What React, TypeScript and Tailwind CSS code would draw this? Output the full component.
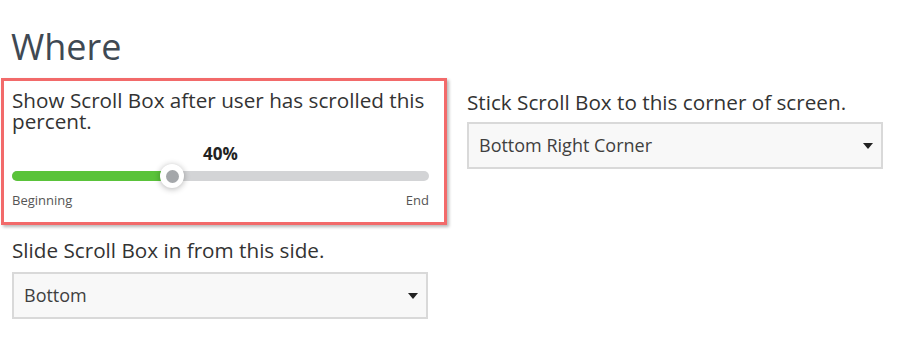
import type React from "react";

const font = { fontFamily: '"Open Sans", "Noto Sans", sans-serif' };

// Select field with caret
const SelectBox: React.FC<{ value: string }> = ({ value }) => (
  <div className="flex h-[47px] w-[416px] items-center justify-between border-2 border-[#d9d9d9] bg-[#f8f8f8] pl-[10px] pr-[8px]">
    <span className="text-[18px] text-[#3f3f3f]">{value}</span>
    <svg width="10" height="6" viewBox="0 0 10 6" className="mt-[1px]">
      <path d="M0 0 L10 0 L5 6 Z" fill="#222" />
    </svg>
  </div>
);

export default function App() {
  const percent = 40;
  const thumbLeft = 160; // px from track start

  return (
    <div className="min-h-[354px] w-[900px] bg-white" style={font}>
      <h1 className="pl-[11px] pt-[27px] text-[36px] font-medium leading-[40px] text-[#3f4953]">Where</h1>

      <div className="mt-[11px] flex">
        {/* Left column */}
        <div className="flex flex-col">
          <div className="ml-[1px] w-[446px] border-[3px] border-[#f26a6a] pb-[13px] pl-[8px] pr-[15px] pt-[9px] shadow-[2px_2px_3px_rgba(0,0,0,0.28)]">
            <div className="text-[20.7px] leading-[21px] text-[#333]">
              Show Scroll Box after user has scrolled this percent.
            </div>
            <div className="mt-[12px] text-center text-[17px] font-bold leading-[20px] text-[#222]">
              {percent}%
            </div>
            <div className="relative mt-[7px] h-[10px] rounded-full bg-[#d3d4d6]">
              <div className="h-full rounded-full bg-[#5ac33a]" style={{ width: thumbLeft }} />
              <div
                className="absolute top-1/2 flex h-[24px] w-[24px] -translate-x-1/2 -translate-y-1/2 items-center justify-center rounded-full bg-white shadow-[0_1px_6px_rgba(0,0,0,0.3)]"
                style={{ left: thumbLeft }}
              >
                <div className="h-[13px] w-[13px] rounded-full bg-[#a4a7aa]" />
              </div>
            </div>
            <div className="mt-[10px] flex justify-between text-[13px] leading-[18px] text-[#555]">
              <span>Beginning</span>
              <span>End</span>
            </div>
          </div>

          <div className="ml-[12px] mt-[13px]">
            <div className="text-[20.7px] leading-[24px] text-[#333]">Slide Scroll Box in from this side.</div>
            <div className="mt-[10px]">
              <SelectBox value="Bottom" />
            </div>
          </div>
        </div>

        {/* Right column */}
        <div className="ml-[20px] pt-[12px]">
          <div className="text-[20.7px] leading-[24px] text-[#333]">Stick Scroll Box to this corner of screen.</div>
          <div className="mt-[8px]">
            <SelectBox value="Bottom Right Corner" />
          </div>
        </div>
      </div>
    </div>
  );
}
